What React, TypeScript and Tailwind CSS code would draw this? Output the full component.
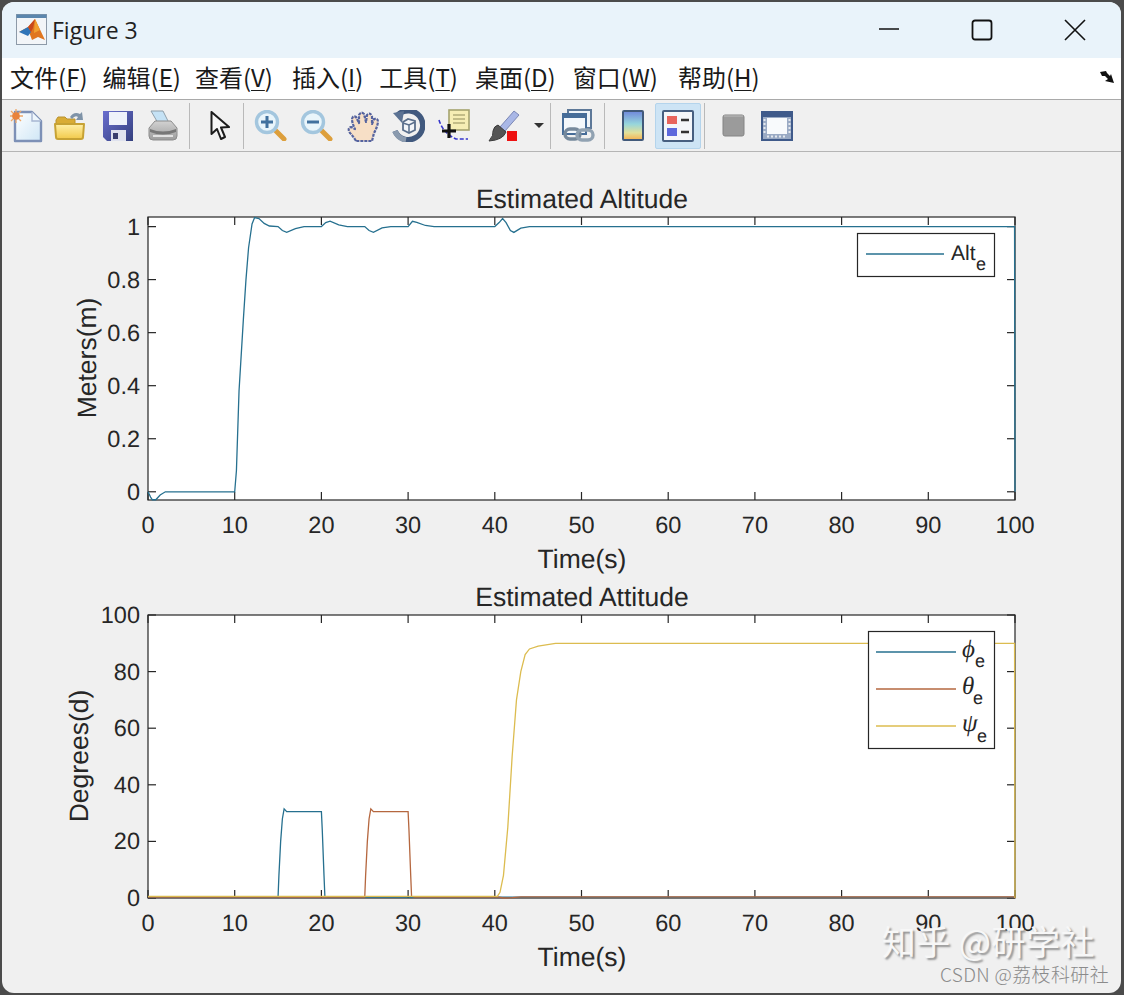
import React from 'react';

const cjk = '"Noto Sans CJK SC", "Noto Sans", sans-serif';
const plotFont = '"Liberation Sans", Arial, sans-serif';

const BLUE = '#26708f';
const RED = '#b5673f';
const YELLOW = '#dcbc4f';
const INK = '#262626';

const AX_L = 148;
const AX_R = 1015;
const AX_T = 37;
const AX_B = 320;

type Pt = [number, number];

const altData: Pt[] = [
  [0, 0], [0.3, -0.02], [0.5, -0.03], [0.9, -0.03], [1.4, -0.012], [2, 0], [10, 0], [10.2, 0.08], [10.5, 0.38], [11, 0.65],
  [11.3, 0.8], [11.6, 0.92], [12, 1.01], [12.3, 1.034], [12.8, 1.03], [13.4, 1.012], [14, 1.002], [15, 1], [15.5, 0.985],
  [16, 0.978], [17, 0.992], [18, 1], [20, 1], [20.5, 1.015], [21, 1.02], [22, 1.006], [23, 1], [25, 1], [25.5, 0.985],
  [26, 0.978], [27, 0.995], [28, 1], [30, 1], [30.5, 1.02], [31, 1.016], [32, 1.004], [33, 1], [40, 1], [40.5, 1.015],
  [40.9, 1.03], [41.3, 1.015], [41.8, 0.985], [42.2, 0.978], [43, 0.994], [44, 1], [99.95, 1], [100, 0],
];

const phiData: Pt[] = [
  [0, 0.3], [15, 0.3], [15.1, 8], [15.3, 20], [15.5, 28], [15.7, 31.5], [16, 30.5], [20, 30.5], [20.1, 24], [20.3, 8], [20.4, 0.6], [20.8, 0.3], [100, 0.3],
];
const thetaData: Pt[] = [
  [0, 0.3], [25, 0.3], [25.1, 8], [25.3, 20], [25.5, 28], [25.7, 31.5], [26, 30.5], [30, 30.5], [30.1, 24], [30.3, 8], [30.4, 0.6], [30.8, 0.3],
  [40.5, 0.3], [41, 0], [42, 0.1], [43, 0.4], [99.9, 0.4], [100, 0],
];
const psiData: Pt[] = [
  [0, 0.6], [40.3, 0.6], [40.6, 2], [41, 8], [41.5, 25], [42, 50], [42.5, 70], [43, 80], [43.5, 86], [44, 88], [45, 89], [47, 90], [99.95, 90], [100, 0],
];

interface ChartProps {
  title: string;
  ylabel: string;
  ylabelX: number;
  yTicks: { label: string; v: number }[];
  yMin: number;
  yMax: number;
  series: { data: Pt[]; color: string }[];
  children?: React.ReactNode;
}

const Chart: React.FC<ChartProps> = ({ title, ylabel, ylabelX, yTicks, yMin, yMax, series, children }) => {
  const px = (t: number) => AX_L + ((AX_R - AX_L) * t) / 100;
  const py = (v: number) => AX_B - ((AX_B - AX_T) * (v - yMin)) / (yMax - yMin);
  const xTicks = [0, 10, 20, 30, 40, 50, 60, 70, 80, 90, 100];
  return (
    <svg
      viewBox="2 0 1119 398"
      className="block w-[1119px] h-[398px]"
      style={{ fontFamily: plotFont, textRendering: 'geometricPrecision' }}
    >
      <rect x={AX_L} y={AX_T} width={AX_R - AX_L} height={AX_B - AX_T} fill="#fff" stroke={INK} strokeWidth={1.2} />
      {xTicks.map((t) => (
        <g key={t}>
          <line x1={px(t)} x2={px(t)} y1={AX_T} y2={AX_T + 8} stroke={INK} strokeWidth={1.2} />
          <line x1={px(t)} x2={px(t)} y1={AX_B} y2={AX_B - 8} stroke={INK} strokeWidth={1.2} />
          <text x={px(t)} y={353} textAnchor="middle" fontSize={23.5} fill={INK}>{t}</text>
        </g>
      ))}
      {yTicks.map((k) => (
        <g key={k.label}>
          <line x1={AX_L} x2={AX_L + 8} y1={py(k.v)} y2={py(k.v)} stroke={INK} strokeWidth={1.2} />
          <line x1={AX_R} x2={AX_R - 8} y1={py(k.v)} y2={py(k.v)} stroke={INK} strokeWidth={1.2} />
          <text x={140} y={py(k.v) + 8} textAnchor="end" fontSize={23.5} fill={INK}>{k.label}</text>
        </g>
      ))}
      {series.map((s, i) => (
        <polyline key={i} points={s.data.map(([t, v]) => `${px(t)},${py(v)}`).join(' ')} fill="none" stroke={s.color} strokeWidth={1.3} />
      ))}
      <text x={582} y={28} textAnchor="middle" fontSize={26.5} fill={INK}>{title}</text>
      <text x={582} y={388} textAnchor="middle" fontSize={26.5} fill={INK}>Time(s)</text>
      <text transform={`translate(${ylabelX} 178) rotate(-90)`} textAnchor="middle" fontSize={26.5} fill={INK}>{ylabel}</text>
      {children}
    </svg>
  );
};

const GreekRow: React.FC<{ y: number; color: string; glyph: string; subX: number; subY: number }> = ({ y, color, glyph, subX, subY }) => (
  <g>
    <line x1={876} x2={956} y1={y} y2={y} stroke={color} strokeWidth={1.3} />
    <text x={962} y={y + 5} fontSize={25} fontStyle="italic" fill={INK} style={{ fontFamily: '"Liberation Serif", serif' }}>{glyph}</text>
    <text x={subX} y={y + subY} fontSize={18} fill={INK}>e</text>
  </g>
);

const TitleBar = () => (
  <div className="h-[56px] bg-[#e9f3fa] flex items-center shrink-0">
    <svg width="32" height="32" viewBox="0 0 32 32" className="ml-[14px] shrink-0">
      <rect x="0.5" y="0.5" width="30" height="30" fill="#f2f5f8" stroke="#8d9aa8" />
      <rect x="0.5" y="0.5" width="30" height="3.5" fill="#5b86ad" />
      <path d="M3 18 L12 13 L19 5 L29 26 L22 23 L16 26 L13 18 Z" fill="#e0761f" />
      <path d="M3 18 L12 13 L15 18 L12 22 Z" fill="#2f74b8" />
      <path d="M12 13 L19 5 L17 14 L15 18 Z" fill="#c8481c" />
      <path d="M19 5 L24 16 L18 19 Z" fill="#f0a030" />
    </svg>
    <span className="ml-[4px] text-[23px] text-[#1f1f1f] leading-none" style={{ fontFamily: '"Open Sans", sans-serif' }}>Figure 3</span>
    <div className="ml-auto flex items-center">
      <svg width="22" height="22" viewBox="0 0 22 22" className="mr-[71px]">
        <line x1="1" x2="21" y1="10" y2="10" stroke="#111" strokeWidth="1.6" />
      </svg>
      <svg width="22" height="22" viewBox="0 0 22 22" className="mr-[71px]">
        <rect x="1.5" y="1.5" width="19" height="19" rx="2.5" fill="none" stroke="#111" strokeWidth="1.8" />
      </svg>
      <svg width="22" height="22" viewBox="0 0 22 22" className="mr-[35px]">
        <path d="M1 1 L21 21 M21 1 L1 21" stroke="#111" strokeWidth="1.6" />
      </svg>
    </div>
  </div>
);

const menus: [string, string, string][] = [
  ['文件', 'F', 'mr-[15px]'],
  ['编辑', 'E', 'mr-[14px]'],
  ['查看', 'V', 'mr-[19px]'],
  ['插入', 'I', 'mr-[16px]'],
  ['工具', 'T', 'mr-[17px]'],
  ['桌面', 'D', 'mr-[17px]'],
  ['窗口', 'W', 'mr-[20px]'],
  ['帮助', 'H', ''],
];

const MenuBar = () => (
  <div className="h-[42px] bg-white border-b border-[#a9a9a9] flex items-center pl-[8px] pr-[6px] pb-[3px] shrink-0" style={{ fontFamily: cjk }}>
    {menus.map(([zh, key, cls]) => (
      <span key={key} className={`text-[24px] leading-none text-[#1a1a1a] whitespace-nowrap ${cls}`}>
        {zh}(<span className="underline underline-offset-[3px] decoration-1">{key}</span>)
      </span>
    ))}
    <svg width="16" height="14" viewBox="0 0 16 14" className="ml-auto">
      <path d="M1 2 L7 1 L8 3 L11 6 L12 4 L15 13 L6 11 L9 9 L6 6 L3 6 Z" fill="#111" />
    </svg>
  </div>
);

const Sep: React.FC<{ className: string }> = ({ className }) => (
  <div className={`w-[1px] h-[46px] bg-[#b9b9b9] shrink-0 ${className}`} />
);

const NewIcon = () => (
  <svg width="34" height="34" viewBox="0 0 34 34" className="ml-[8px] shrink-0">
    <defs>
      <linearGradient id="pg" x1="0" y1="0" x2="1" y2="1">
        <stop offset="0" stopColor="#ffffff" />
        <stop offset="1" stopColor="#cfe6f6" />
      </linearGradient>
    </defs>
    <path d="M5 3 H22 L31 12 V32 H5 Z" fill="url(#pg)" stroke="#7d90b6" strokeWidth="2.4" strokeLinejoin="round" />
    <path d="M22 3 L22 12 H31" fill="#eef6fc" stroke="#a7b6d2" strokeWidth="1.4" />
    <path d="M6 0 V14 M-1 7 H13 M1 2 L11 12 M11 2 L1 12" stroke="#f0a868" strokeWidth="1.3" />
    <circle cx="6" cy="7" r="3.8" fill="#e9823a" />
  </svg>
);

const OpenIcon = () => (
  <svg width="32" height="30" viewBox="0 0 32 30" className="ml-[10px] shrink-0">
    <defs>
      <linearGradient id="fd" x1="0" y1="0" x2="0" y2="1">
        <stop offset="0" stopColor="#fff0a8" />
        <stop offset="1" stopColor="#f2c94a" />
      </linearGradient>
    </defs>
    <path d="M2 9 L4 6 H11 L13 8 H21 V13 H2 Z" fill="#d9ac35" stroke="#b99230" />
    <path d="M16 6 Q20 0 26 3 L28 1 L29 9 L22 9 L24 6 Q21 4 18 8 Z" fill="#7f93a8" />
    <path d="M1 13 H30 L29 26 Q29 28 27 28 H4 Q2 28 2 26 Z" fill="url(#fd)" stroke="#c7a234" strokeWidth="2" strokeLinejoin="round" />
  </svg>
);

const SaveIcon = () => (
  <svg width="30" height="30" viewBox="0 0 30 30" className="ml-[17px] shrink-0">
    <defs>
      <linearGradient id="sv" x1="0" y1="0" x2="1" y2="1">
        <stop offset="0" stopColor="#6a6ecf" />
        <stop offset="1" stopColor="#34407e" />
      </linearGradient>
    </defs>
    <path d="M0 0 H30 V30 H4 L0 26 Z" fill="url(#sv)" />
    <rect x="6" y="1" width="18" height="13" fill="#eef1fa" />
    <rect x="8" y="19" width="15" height="11" fill="#dfe2ee" />
    <rect x="10" y="22" width="5" height="6" fill="#3a3f6e" />
  </svg>
);

const PrintIcon = () => (
  <svg width="30" height="31" viewBox="0 0 30 31" className="ml-[15px] shrink-0">
    <defs>
      <linearGradient id="pr" x1="0" y1="0" x2="0" y2="1">
        <stop offset="0" stopColor="#d2d2d2" />
        <stop offset="1" stopColor="#9c9c9c" />
      </linearGradient>
    </defs>
    <path d="M3 1 H15 L21 13 H10 Z" fill="#c5e2f5" stroke="#8f9ea9" />
    <path d="M1 18 L7 11 H23 L29 18 V26 Q29 30 25 30 H5 Q1 30 1 26 Z" fill="url(#pr)" stroke="#8c8c8c" />
    <path d="M2 19 Q15 24 28 19 V22 Q15 27 2 22 Z" fill="#777" />
    <path d="M5 26 H25" stroke="#e2e2e2" strokeWidth="2" />
  </svg>
);

const CursorIcon = () => (
  <svg width="21" height="30" viewBox="0 0 21 30" className="ml-[20px] shrink-0">
    <path d="M1.5 1 V23 L7 18 L11 28 L15 26 L11 16.5 L19 16 Z" fill="#f6f6f6" stroke="#1c1c1c" strokeWidth="2" strokeLinejoin="round" />
  </svg>
);

const Lens: React.FC<{ plus: boolean; className: string }> = ({ plus, className }) => (
  <svg width="33" height="31" viewBox="0 0 33 31" className={`shrink-0 ${className}`}>
    <path d="M20 19 L30 29" stroke="#dd9f3c" strokeWidth="5" strokeLinecap="round" />
    <circle cx="13" cy="12" r="10.5" fill="#e9f5fb" stroke="#a3c6de" strokeWidth="3.4" />
    <path d={plus ? 'M7 12 H19 M13 6 V18' : 'M7 12 H19'} stroke="#41719e" strokeWidth="3" />
  </svg>
);

const HandIcon = () => (
  <svg width="33" height="32" viewBox="0 0 33 32" className="ml-[14px] shrink-0">
    <path
      d="M9 31 Q6 26 3 23 Q0 18 4 17 L8 19 Q5 13 5 9 Q6 5 9 7 L12 13 L12 5 Q14 1 17 4 L19 12 L20 5 Q23 2 25 6 L25 14 L27 9 Q31 8 31 12 Q30 18 27 23 L25 31 Z"
      fill="#f7dfc6"
      stroke="#55639f"
      strokeWidth="2.2"
      strokeLinejoin="round"
      strokeDasharray="3 1"
    />
  </svg>
);

const RotateIcon = () => (
  <svg width="33" height="32" viewBox="0 0 33 32" className="ml-[12px] shrink-0">
    <path d="M6 5 A14.5 14.5 0 1 1 3 21" fill="none" stroke="#41597e" strokeWidth="5.5" />
    <path d="M3 21 A14.5 14.5 0 0 0 14 30" fill="none" stroke="#8a9aae" strokeWidth="5.5" />
    <path d="M1 3 L12 1 L10 13 Z" fill="#5b7293" />
    <path d="M11 12 L16 9 L23 11 V20 L17 23 L11 20 Z" fill="#f2f5f9" stroke="#5a6f8c" strokeWidth="1.8" />
    <path d="M11 13 L17 15 L23 12 M17 15 V23" fill="none" stroke="#5a6f8c" strokeWidth="1.5" />
  </svg>
);

const DataTipIcon = () => (
  <svg width="33" height="33" viewBox="0 0 33 33" className="ml-[13px] shrink-0">
    <rect x="11" y="1" width="20" height="20" fill="#f6eeb4" stroke="#a5a36e" strokeWidth="1.6" />
    <path d="M15 6 H27 M15 10 H27 M15 14 H27" stroke="#b3ad78" strokeWidth="1.5" />
    <path d="M1 11 Q5 24 18 30 H30" fill="none" stroke="#3434cc" strokeWidth="1.6" strokeDasharray="4 2" />
    <path d="M11 15 V29 M4 22 H18" stroke="#111" strokeWidth="3.2" />
  </svg>
);

const BrushIcon = () => (
  <svg width="33" height="32" viewBox="0 0 33 32" className="ml-[16px] shrink-0">
    <path d="M13 17 L27 1 L32 5 L18 21 Z" fill="#a9b7e6" stroke="#7a86b4" />
    <path d="M11 15 L19 22 Q16 30 2 31 Q7 25 6 21 Q7 16 11 15 Z" fill="#555" stroke="#3a3a3a" />
    <rect x="20" y="21" width="10" height="10" fill="#ee1111" />
  </svg>
);

const LinkIcon = () => (
  <svg width="33" height="33" viewBox="0 0 33 33" className="ml-[11px] shrink-0">
    <rect x="6" y="1" width="23" height="18" fill="#eef3f8" stroke="#5d7898" strokeWidth="2" />
    <rect x="1" y="5" width="23" height="20" fill="#f3f7fb" stroke="#466c98" strokeWidth="2" />
    <rect x="1" y="5" width="23" height="4" fill="#466c98" />
    <rect x="3" y="20" width="15" height="10" rx="5" fill="none" stroke="#76899c" strokeWidth="3.4" />
    <rect x="15" y="21" width="16" height="10" rx="5" fill="none" stroke="#91a2b2" strokeWidth="3.4" />
  </svg>
);

const ColorbarIcon = () => (
  <svg width="23" height="32" viewBox="0 0 23 32" className="ml-[17px] shrink-0">
    <defs>
      <linearGradient id="cb" x1="0" y1="0" x2="0" y2="1">
        <stop offset="0" stopColor="#6f86dc" />
        <stop offset="0.45" stopColor="#96d6dc" />
        <stop offset="0.75" stopColor="#e2e09a" />
        <stop offset="1" stopColor="#f5b04f" />
      </linearGradient>
    </defs>
    <rect x="1" y="1" width="20" height="29" rx="1" fill="url(#cb)" stroke="#41597a" strokeWidth="2" />
  </svg>
);

const LegendButton = () => (
  <div className="ml-[10px] w-[46px] h-[46px] rounded-[2px] bg-[#cde4f5] border border-[#b4d4ec] flex items-center justify-center shrink-0">
    <svg width="32" height="32" viewBox="0 0 32 32">
      <rect x="1" y="1" width="30" height="30" rx="1" fill="#f4f6f9" stroke="#475f80" strokeWidth="2" />
      <rect x="5" y="6" width="10" height="8" fill="#e8645c" />
      <rect x="5" y="18" width="10" height="8" fill="#5c68dc" />
      <path d="M19 10 H27 M19 22 H27" stroke="#333" strokeWidth="2.4" />
    </svg>
  </div>
);

const GraySquareIcon = () => (
  <svg width="23" height="23" viewBox="0 0 23 23" className="ml-[17px] shrink-0">
    <rect x="1" y="1" width="21" height="21" rx="2" fill="#9b9b9b" stroke="#848484" />
    <path d="M2 2 H21" stroke="#bdbdbd" />
  </svg>
);

const WindowIcon = () => (
  <svg width="32" height="30" viewBox="0 0 32 30" className="ml-[16px] shrink-0">
    <rect x="1" y="1" width="30" height="28" fill="#9aaac4" stroke="#3f5a8a" strokeWidth="2" />
    <rect x="1" y="1" width="30" height="5" fill="#3f5a8a" />
    <rect x="6" y="7" width="20" height="16" fill="#f8fafc" />
    <path d="M3.5 8 V23 M28.5 8 V23 M6 25.5 H26" stroke="#e4e8ee" strokeWidth="2" strokeDasharray="2 2" />
  </svg>
);

const ToolBar = () => (
  <div className="h-[52px] bg-[#f0f0f0] border-b border-[#b5b5b5] flex items-center shrink-0 [&_svg]:blur-[0.5px]">
    <NewIcon />
    <OpenIcon />
    <SaveIcon />
    <PrintIcon />
    <Sep className="ml-[11px]" />
    <CursorIcon />
    <Sep className="ml-[12px]" />
    <Lens plus className="ml-[10px]" />
    <Lens plus={false} className="ml-[13px]" />
    <HandIcon />
    <RotateIcon />
    <DataTipIcon />
    <BrushIcon />
    <svg width="10" height="5" viewBox="0 0 10 5" className="ml-[14px] shrink-0">
      <path d="M0 0 H10 L5 5 Z" fill="#333" />
    </svg>
    <Sep className="ml-[6px]" />
    <LinkIcon />
    <Sep className="ml-[9px]" />
    <ColorbarIcon />
    <LegendButton />
    <Sep className="ml-[3px]" />
    <GraySquareIcon />
    <WindowIcon />
  </div>
);

const Watermark = () => (
  <div className="absolute right-[12px] bottom-[6px] flex flex-col items-end" style={{ fontFamily: cjk }}>
    <span className="text-[34px] leading-[40px] text-[#f7f7f7] mr-[14px] tracking-[0.5px] [text-shadow:2px_2px_2px_#8f8f8f]">知乎 @研学社</span>
    <span className="text-[19px] leading-[26px] text-[#8b8b8b] tracking-[0.35px] font-light">CSDN @荔枝科研社</span>
  </div>
);

export default function App() {
  return (
    <div className="w-[1124px] h-[995px] bg-[#4b4b4b] pt-[2px] pl-[2px] pr-[3px] pb-[2px] overflow-hidden">
      <div className="relative w-full h-full bg-[#f0f0f0] rounded-[12px] overflow-hidden flex flex-col">
        <TitleBar />
        <MenuBar />
        <ToolBar />
        <div className="pt-[28px]">
          <Chart
            title="Estimated Altitude"
            ylabel="Meters(m)"
            ylabelX={96}
            yMin={-0.031}
            yMax={1.036}
            yTicks={[
              { label: '0', v: 0 },
              { label: '0.2', v: 0.2 },
              { label: '0.4', v: 0.4 },
              { label: '0.6', v: 0.6 },
              { label: '0.8', v: 0.8 },
              { label: '1', v: 1 },
            ]}
            series={[{ data: altData, color: BLUE }]}
          >
            <rect x={857.5} y={53.5} width={137} height={43} fill="#fff" stroke={INK} strokeWidth={1.2} />
            <line x1={866} x2={944} y1={74} y2={74} stroke={BLUE} strokeWidth={1.3} />
            <text x={951} y={80} fontSize={21} fill={INK}>Alt</text>
            <text x={976} y={90} fontSize={18} fill={INK}>e</text>
          </Chart>
          <Chart
            title="Estimated Attitude"
            ylabel="Degrees(d)"
            ylabelX={88}
            yMin={0}
            yMax={100}
            yTicks={[
              { label: '0', v: 0 },
              { label: '20', v: 20 },
              { label: '40', v: 40 },
              { label: '60', v: 60 },
              { label: '80', v: 80 },
              { label: '100', v: 100 },
            ]}
            series={[
              { data: phiData, color: BLUE },
              { data: thetaData, color: RED },
              { data: psiData, color: YELLOW },
            ]}
          >
            <rect x={868.5} y={53.5} width={126} height={117} fill="#fff" stroke={INK} strokeWidth={1.2} />
            <GreekRow y={74} color={BLUE} glyph="ϕ" subX={975} subY={15} />
            <GreekRow y={111} color={RED} glyph="θ" subX={973} subY={15} />
            <GreekRow y={148} color={YELLOW} glyph="ψ" subX={977} subY={16} />
          </Chart>
        </div>
        <Watermark />
      </div>
    </div>
  );
}
